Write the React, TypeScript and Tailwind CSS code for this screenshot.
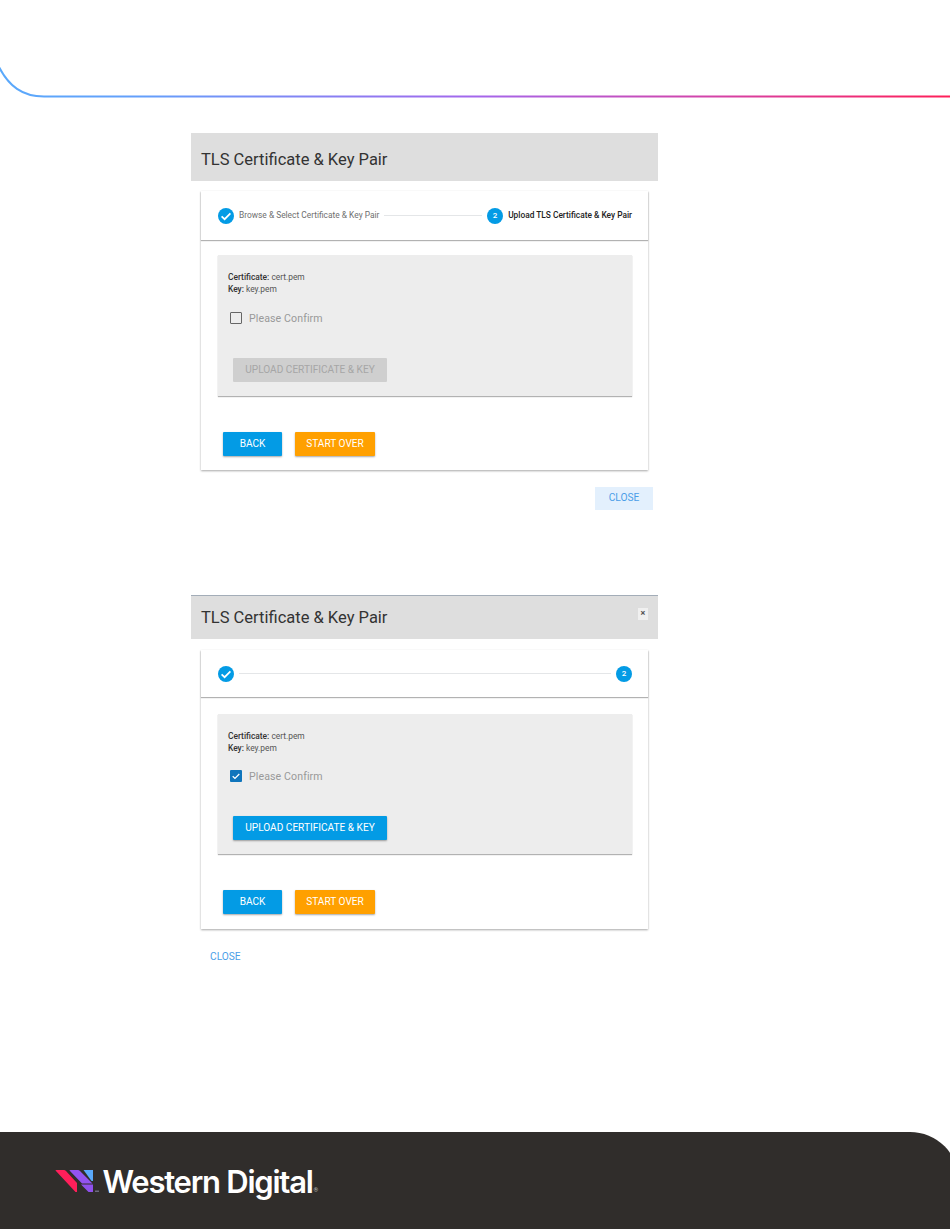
import { ReactElement, ReactNode } from "react";

function StepDot({ children }: { children: ReactNode }): ReactElement {
  return (
    <div className="flex size-4 shrink-0 items-center justify-center rounded-full bg-[#039be5] text-[8px] font-medium text-white">
      {children}
    </div>
  );
}

function CheckMark({ className }: { className: string }): ReactElement {
  return (
    <svg viewBox="0 0 16 16" className={className} fill="none">
      <path d="M3.6 8.3 L6.6 11.2 L12.4 5.4" stroke="#fff" strokeWidth="1.7" />
    </svg>
  );
}

function ActionButton({
  label,
  color,
  className,
}: {
  label: string;
  color: "blue" | "orange" | "disabled";
  className: string;
}): ReactElement {
  const colors = {
    blue: "bg-[#039be5] text-white shadow-[0_1px_2px_rgba(0,0,0,0.35)]",
    orange: "bg-[#ffa000] text-white shadow-[0_1px_2px_rgba(0,0,0,0.35)]",
    disabled: "bg-[#cfcfcf] text-[#a6a6a6]",
  };
  return (
    <div
      className={`flex h-6 items-center justify-center rounded-[1px] text-[10.1px] ${colors[color]} ${className}`}
    >
      {label}
    </div>
  );
}

function TlsPanel({
  confirmed,
  showLabels,
}: {
  confirmed: boolean;
  showLabels: boolean;
}): ReactElement {
  return (
    <div className="mx-[10px] bg-white shadow-[0_1px_2px_rgba(0,0,0,0.35)]">
      {/* Stepper */}
      <div
        className={`flex items-center pl-[17px] pr-4 shadow-[0_1px_1px_rgba(0,0,0,0.3)] ${
          showLabels ? "h-[49px]" : "h-[47px]"
        }`}
      >
        <StepDot>
          <CheckMark className="size-4" />
        </StepDot>
        {showLabels && (
          <span className="ml-[5px] text-[8.4px] text-[#6f6f6f]">
            Browse &amp; Select Certificate &amp; Key Pair
          </span>
        )}
        <div className="mx-[5px] h-px flex-1 bg-[#e4e6e8]" />
        <StepDot>2</StepDot>
        {showLabels && (
          <span className="ml-[5px] text-[8.35px] font-medium text-[#222]">
            Upload TLS Certificate &amp; Key Pair
          </span>
        )}
      </div>

      {/* Body */}
      <div className={showLabels ? "pb-[14px] pt-[15px]" : "pb-[15px] pt-[17px]"}>
        <div
          className={`ml-[17px] mr-4 bg-[#ededed] pl-[10px] pt-4 shadow-[0_1px_1px_rgba(0,0,0,0.3)] ${
            showLabels ? "h-[141px]" : "h-[140px]"
          }`}
        >
          <div className="text-[8.4px] leading-3 text-[#555]">
            <div>
              <span className="font-medium text-[#333]">Certificate:</span>{" "}
              cert.pem
            </div>
            <div>
              <span className="font-medium text-[#333]">Key:</span> key.pem
            </div>
          </div>
          <div
            className={`ml-[2px] flex h-3 items-center gap-[7px] ${
              showLabels ? "mt-[17px]" : "mt-4"
            }`}
          >
            {confirmed ? (
              <div className="flex size-3 items-center justify-center rounded-[1px] bg-[#0f75bc]">
                <CheckMark className="size-3" />
              </div>
            ) : (
              <div className="size-3 rounded-[1px] border-[1.5px] border-[#666]" />
            )}
            <span className="pt-px text-[10.6px] tracking-[0.1px] text-[#999]">
              Please Confirm
            </span>
          </div>
          <ActionButton
            label="UPLOAD CERTIFICATE & KEY"
            color={confirmed ? "blue" : "disabled"}
            className="ml-[5px] mt-[34px] w-[154px]"
          />
        </div>
        <div className="ml-[22px] mt-9 flex gap-[13px]">
          <ActionButton label="BACK" color="blue" className="w-[59px]" />
          <ActionButton label="START OVER" color="orange" className="w-[80px]" />
        </div>
      </div>
    </div>
  );
}

export default function App(): ReactElement {
  return (
    <div className="flex h-[1229px] w-[950px] flex-col overflow-hidden bg-white font-['Roboto',sans-serif]">
      {/* Page header rule */}
      <svg width="950" height="100" className="shrink-0">
        <defs>
          <linearGradient id="rule" gradientUnits="userSpaceOnUse" x1="0" y1="0" x2="950" y2="0">
            <stop offset="0" stopColor="#5aa9fb" />
            <stop offset="0.15" stopColor="#649ffb" />
            <stop offset="0.5" stopColor="#a467ec" />
            <stop offset="0.75" stopColor="#d443a8" />
            <stop offset="1" stopColor="#ff1f58" />
          </linearGradient>
        </defs>
        <path
          d="M-1 67 C 9 86 22 96.5 44 96.5 L950 96.5"
          fill="none"
          stroke="url(#rule)"
          strokeWidth="2"
        />
      </svg>

      {/* First dialog capture */}
      <div className="ml-[191px] mt-[33px] w-[467px]">
        <div className="flex h-12 items-center bg-[#dedede] pl-[10px] pt-[6px] text-[16.5px] text-[#333]">
          TLS Certificate &amp; Key Pair
        </div>
        <div className="mt-[10px]">
          <TlsPanel confirmed={false} showLabels />
        </div>
        <div className="mt-[17px] flex justify-end pr-[5px]">
          <div className="flex h-[23px] w-[58px] items-center justify-center bg-[#e3f0fd] pb-px text-[10.2px] text-[#4a9ee8]">
            CLOSE
          </div>
        </div>
      </div>

      {/* Second dialog capture */}
      <div className="ml-[191px] mt-[85px] w-[467px]">
        <div className="flex h-[44px] items-center justify-between border-t border-[#a3adb8] bg-[#dedede] pl-[10px] pr-[10px] text-[16.5px] text-[#333]">
          <span className="pt-[2px]">TLS Certificate &amp; Key Pair</span>
          <div className="mb-[8px] flex h-3 w-[10px] items-center justify-center bg-[#f0f0f0] text-[9px] font-bold leading-none text-[#555]">
            ×
          </div>
        </div>
        <div className="mt-[11px]">
          <TlsPanel confirmed showLabels={false} />
        </div>
        <div className="ml-[19px] mt-[22px] text-[10.2px] leading-3 text-[#4a9ee8]">
          CLOSE
        </div>
      </div>

      {/* Footer */}
      <div className="mt-auto overflow-hidden">
        <div className="-mr-[9px] flex h-[97px] items-start rounded-tr-[49px] bg-[#302d2b] pl-[55px] pt-[28px]">
          <svg width="48" height="28" viewBox="0 0 48 28" className="mt-[9px] shrink-0">
            <path d="M0.5 1.5 Q0 1 1.5 1 H9 Q10 1 11 2 L22 14 V23 H20.5 Z" fill="#ff1f5a" />
            <path d="M14.5 1.5 Q14 1 15.5 1 H23 Q24 1 25 2 L37.5 14.5 H27 Z" fill="#9353f0" />
            <path d="M26 15.5 H38 V23 H33.5 Z" fill="#8f50ec" />
            <path d="M28.5 1 H38 V12 H36.5 Z" fill="#5aa9fb" />
            <rect x="40" y="21.5" width="4" height="1.5" fill="#6d6a80" />
          </svg>
          <span className="-ml-[0.5px] -mt-[0.5px] font-['Inter',sans-serif] text-[31px] font-semibold leading-[44px] tracking-[-1.25px] text-white">
            Western Digital
          </span>
          <span className="ml-[1px] mt-[25px] text-[6px] text-[#bbb]">®</span>
        </div>
      </div>
    </div>
  );
}
